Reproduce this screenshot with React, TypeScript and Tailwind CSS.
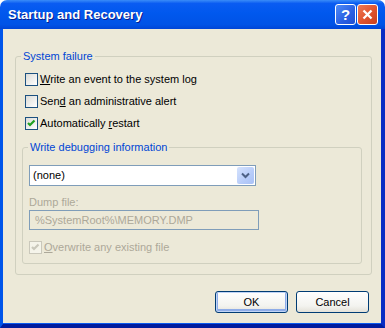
import type { JSX } from "react";

function CheckBox({ checked, disabled }: { checked?: boolean; disabled?: boolean }): JSX.Element {
  return (
    <span
      className={
        "flex h-[13px] w-[13px] shrink-0 items-center justify-center border " +
        (disabled
          ? "border-[#CAC8BB] bg-[#F5F4EA]"
          : "border-[#1C5180] bg-gradient-to-br from-[#DCDCD7] to-[#FFFFFF]")
      }
    >
      {checked && (
        <svg width="11" height="11" viewBox="0 0 11 11">
          <path
            d="M2 5 L4 7 L8.5 2.5"
            fill="none"
            stroke={disabled ? "#CAC8BB" : "#21A121"}
            strokeWidth="2.2"
          />
        </svg>
      )}
    </span>
  );
}

function Option({
  children,
  checked,
  disabled,
}: {
  children: React.ReactNode;
  checked?: boolean;
  disabled?: boolean;
}): JSX.Element {
  return (
    <div className="flex h-[13px] items-center gap-[2px]">
      <CheckBox checked={checked} disabled={disabled} />
      <span className={disabled ? "text-[#ACA899]" : ""}>{children}</span>
    </div>
  );
}

export default function App(): JSX.Element {
  return (
    <div className="flex h-[328px] w-[385px] flex-col font-['Liberation_Sans',Arial,sans-serif] text-[11px] leading-[13px] text-black">
      {/* title bar */}
      <div className="flex h-[29px] shrink-0 items-center rounded-t-[7px] bg-[linear-gradient(to_bottom,#3A8CF8_0%,#0A5CF2_12%,#0058EE_45%,#0053E6_85%,#0045D6_100%)] pl-[8px] pr-[7px]">
        <span className="text-[13px] font-bold text-white [text-shadow:1px_1px_#0A1E8C]">
          Startup and Recovery
        </span>
        <div className="ml-auto flex gap-[1px]">
          <div className="flex h-[21px] w-[21px] items-center justify-center rounded-[3px] border border-white bg-[linear-gradient(135deg,#4F8CF7,#2A5FE2_60%,#1F4FD2)] text-[15px] font-bold leading-none text-white">
            ?
          </div>
          <div className="flex h-[21px] w-[21px] items-center justify-center rounded-[3px] border border-white bg-[linear-gradient(135deg,#EE7A55,#E0532E_55%,#C8401F)]">
            <svg width="13" height="13" viewBox="0 0 13 13">
              <path d="M2.5 2.5 L10.5 10.5 M10.5 2.5 L2.5 10.5" stroke="white" strokeWidth="2.3" />
            </svg>
          </div>
        </div>
      </div>

      {/* frame + client */}
      <div className="flex flex-1 border-b-[4px] border-l-[3px] border-r-[4px] border-b-[#001C9E] border-l-[#0055EA] border-r-[#0A2CC4] bg-[#0A5AEF] pb-[1px]">
        <div className="flex flex-1 flex-col bg-[#ECE9D8]">
          <fieldset className="ml-[12px] mr-[9px] mt-[21px] rounded-[3px] border border-[#D0D0BF] pb-[10px] pl-[6px] pr-[9px]">
            <legend className="ml-[-1px] px-[2px] text-[#0046D5]">System failure</legend>
            <div className="flex flex-col gap-[9px] pl-[3px] pt-[10px]">
              <Option>
                <span className="underline">W</span>rite an event to the system log
              </Option>
              <Option>
                Sen<span className="underline">d</span> an administrative alert
              </Option>
              <Option checked>
                Automatically <span className="underline">r</span>estart
              </Option>
            </div>

            <fieldset className="mt-[11px] rounded-[3px] border border-[#D0D0BF] pb-[9px] pl-[6px]">
              <legend className="ml-[-1px] px-[2px] text-[#0046D5]">Write debugging information</legend>
              <div className="mt-[11px] flex h-[21px] w-[227px] items-center border border-[#7F9DB9] bg-white pl-[3px] pr-[1px]">
                <span>(none)</span>
                <div className="ml-auto flex h-[17px] w-[17px] items-center justify-center rounded-[2px] bg-[linear-gradient(135deg,#D6E3FD,#B7CCF9_60%,#A9C1F6)]">
                  <svg width="11" height="11" viewBox="0 0 11 11">
                    <path d="M2 3.5 L5.5 7 L9 3.5" fill="none" stroke="#4D6185" strokeWidth="2" />
                  </svg>
                </div>
              </div>
              <div className="mt-[10px] text-[#ACA899]">Dump file:</div>
              <div className="mt-[1px] flex h-[20px] w-[230px] items-center border border-[#7F9DB9] pl-[5px] text-[#ACA899]">
                %SystemRoot%\MEMORY.DMP
              </div>
              <div className="mt-[11px]">
                <Option checked disabled>
                  <span className="underline">O</span>verwrite any existing file
                </Option>
              </div>
            </fieldset>
          </fieldset>

          <div className="mr-[12px] mt-[16px] flex justify-end gap-[8px]">
            <button className="h-[22px] w-[73px] rounded-[3px] border border-[#003C74] bg-[linear-gradient(to_bottom,#FFFFFF,#F3F3EF_70%,#E3E1D8)] shadow-[inset_0_0_0_1px_#C0D4F6,inset_0_-1px_0_2px_#8EACE8]">
              OK
            </button>
            <button className="h-[22px] w-[73px] rounded-[3px] border border-[#003C74] bg-[linear-gradient(to_bottom,#FFFFFF,#F3F3EF_70%,#E3E1D8)]">
              Cancel
            </button>
          </div>
        </div>
      </div>
    </div>
  );
}
